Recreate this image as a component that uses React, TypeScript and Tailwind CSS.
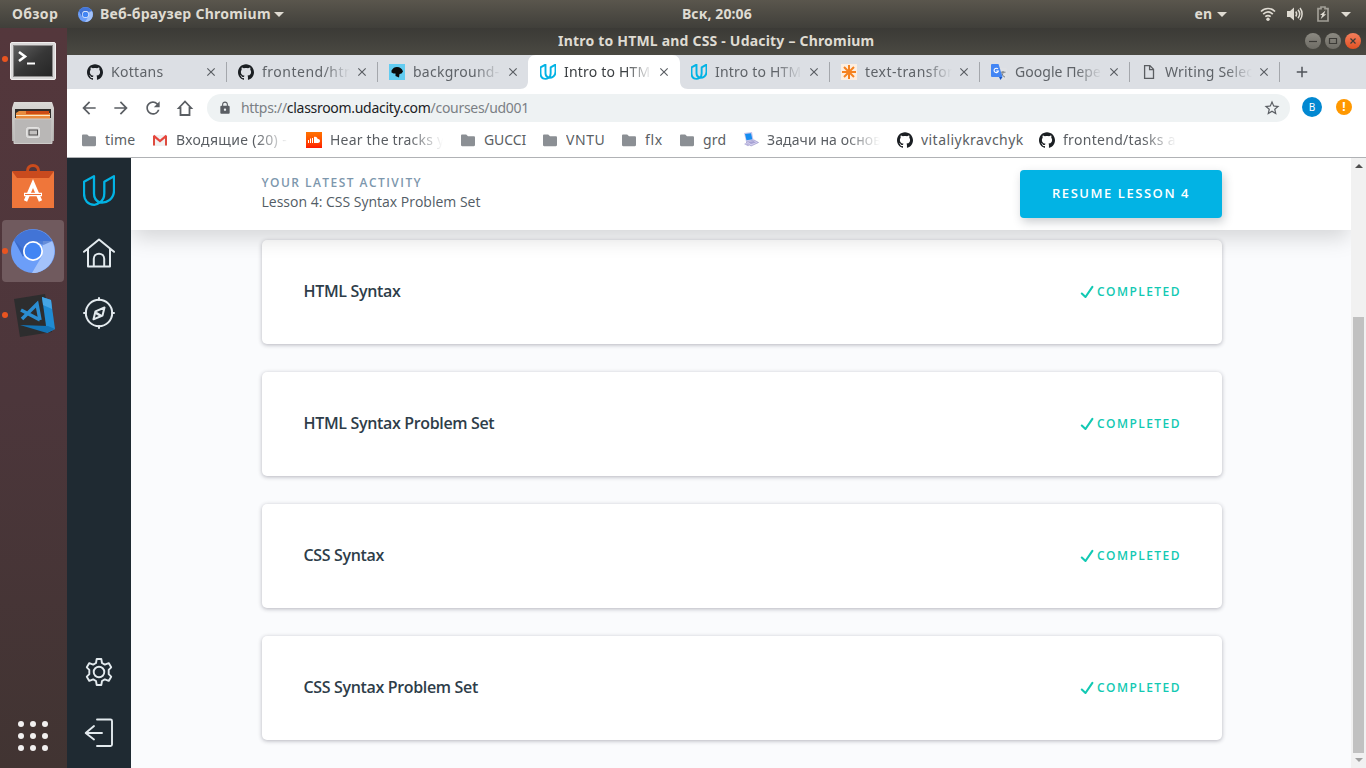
import type { ReactNode } from "react";
import { SiGithub } from "react-icons/si";
import { MdAdd, MdArrowBack, MdArrowForward, MdClose, MdLock, MdRefresh, MdStarBorder } from "react-icons/md";

const GithubMark = () => <SiGithub className="size-4 text-[#1b1f23]" />;

const UdacityMark = ({ className, width = 2.6 }: { className: string; width?: number }) => (
  <svg viewBox="0 0 32 32" className={className} fill="none" stroke="#02b3e4" strokeWidth={width} strokeLinejoin="round">
    <path d="M11 1.2v17.3c0 4.6 2.1 7.500 5.7 8.9-1.600 1.400-3.300 2.400-5.400 2.400C5 29.800 1 25.400 1 18.500V6.800z" />
    <path d="M16.700 27.400c2.800-1.500 4.600-4.500 4.600-9.100V6.800L31 1.200v14.500c0 7.500-6.500 13-14.300 11.700z" />
  </svg>
);

const ChromiumMark = ({ className }: { className: string }) => (
  <svg viewBox="0 0 44 44" className={className}>
    <circle cx="22" cy="22" r="22" fill="#6c9ef8" />
    <path d="M3 11A22 22 0 0 1 41 12H22L12 28z" fill="#4274d6" />
    <path d="M41 12A22 22 0 0 1 21 44l10-17 1-15z" fill="#a3c2fa" />
    <path d="M22 12h19.500l-9 4zM12 27L3 11l9 9z" fill="#3462bd" opacity=".55" />
    <circle cx="22" cy="22" r="10" fill="#fff" />
    <circle cx="22" cy="22" r="8.300" fill="#4285f4" />
  </svg>
);

const SpaniardIcon = () => (
  <svg viewBox="0 0 16 16" className="size-4">
    <path d="M0 0h16v16H0z" fill="#62ccf1" />
    <path d="M2.500 6.500C4 4 5.500 3 8 3c3 0 5 1.500 6 4.500L12.500 9.500 10.500 10 10 13.500 6.500 12 6.500 9.500 4.500 9.500 2.500 8.500z" fill="#0b0b0b" />
  </svg>
);

const AsteriskIcon = () => (
  <svg viewBox="0 0 16 16" className="size-4">
    <path d="M0 0h16v16H0z" fill="#fdeee0" />
    <path d="M8 1v14M1 8h14M3 3l10 10M13 3L3 13" stroke="#f58220" strokeWidth="2" />
  </svg>
);

const TranslateIcon = () => (
  <svg viewBox="0 0 16 16" className="size-4">
    <path d="M7 4h8a1 1 0 0 1 1 1v10a1 1 0 0 1-1 1H9z" fill="#dfe1e5" />
    <path d="M9.500 8.200h5M12 7v1.200c0 2-1.500 4-2.500 4.800M10.500 9.500c.6 1.500 2 3 3.500 3.600" stroke="#777c82" fill="none" />
    <path d="M1 0h6.500l4 13H1a1 1 0 0 1-1-1V1a1 1 0 0 1 1-1z" fill="#4285f4" />
    <path d="M8 13h3.500L9.500 16z" fill="#1a56c4" />
    <path d="M7 5a2.200 2.200 0 1 0 .400 2H5.200" stroke="#fff" fill="none" strokeWidth="1.100" />
  </svg>
);

const PageIcon = () => (
  <svg viewBox="0 0 16 16" className="size-4" fill="none" stroke="#5a5d61" strokeWidth="1.300">
    <path d="M3.600 1.600h5.300l3.600 3.700v9H3.600zM8.600 1.600v4h4" />
  </svg>
);

const GmailIcon = () => (
  <svg viewBox="0 0 16 16" className="size-4">
    <path d="M1 3h14v11H1z" fill="#f1f1f1" />
    <path d="M2 13.500V4M14 13.500V4" fill="none" stroke="#dd4b3e" strokeWidth="2" />
    <path d="M1.500 3.700L8 9l6.500-5.300" fill="none" stroke="#e8453c" strokeWidth="2.200" />
  </svg>
);

const SoundIcon = () => (
  <span className="flex size-4 items-center justify-center bg-linear-to-b from-[#ff7200] to-[#ff1500]">
    <svg viewBox="0 0 16 16" className="size-4" fill="#fff">
      <path d="M2 8h1v3H2zM4 6.500h1V11H4zM6 6h1v5H6zM8 5c2-.800 3.500.500 3.700 2 1.300-.3 2.300.7 2.300 2s-.9 2-2 2H8z" />
    </svg>
  </span>
);

const LaptopIcon = () => (
  <svg viewBox="0 0 16 16" className="size-4">
    <path d="M1 1l8-1 1.500 8L3 9.500z" fill="#c9c6ec" />
    <path d="M2 2l6-.800L9.300 7.300 3.500 8.300z" fill="#168df0" />
    <path d="M3 10l8-2 4.500 2.500L8 14z" fill="#d7d3f2" stroke="#8c86c0" strokeWidth=".6" />
    <path d="M5 10.300l5.500-1.300 2.500 1.400-5 1.600z" fill="#a7a2d4" />
    <path d="M1 12l2-1 4 2-2 1.300z" fill="#b7b3dd" />
  </svg>
);

const FolderIcon = () => (
  <svg viewBox="0 0 16 16" className="size-4" fill="#8b8f94">
    <path d="M2.200 2.500h4L8 4.300h5.700c.8 0 1.300.5 1.300 1.200V13c0 .7-.5 1.200-1.200 1.200H2.200C1.500 14.200 1 13.700 1 13V3.700c0-.7.5-1.200 1.200-1.200z" />
  </svg>
);

const fade = "[mask-image:linear-gradient(to_right,black_70%,transparent_100%)]";

type Tab = { icon: ReactNode; label: string; size: string; text: string; active?: boolean; divider?: boolean };
const tabs: Tab[] = [
  { icon: <GithubMark />, label: "Kottans", size: "w-[151px]", text: "w-[88px] tracking-[0.3px]", divider: true },
  { icon: <GithubMark />, label: "frontend/htm", size: "w-[151px]", text: "w-[88px] tracking-[0.5px]", divider: true },
  { icon: <SpaniardIcon />, label: "background-", size: "w-[151px]", text: "w-[88px] tracking-[0.25px]" },
  { icon: <UdacityMark className="size-4" width={3.800} />, label: "Intro to HTM", size: "w-[151px]", text: "w-[88px] tracking-[0.2px]", active: true },
  { icon: <UdacityMark className="size-4" width={3.800} />, label: "Intro to HTM", size: "w-[150px]", text: "w-[87px] tracking-[0.2px]", divider: true },
  { icon: <AsteriskIcon />, label: "text-transfor", size: "w-[150px]", text: "w-[87px] tracking-[0.45px]", divider: true },
  { icon: <TranslateIcon />, label: "Google Пере", size: "w-[150px]", text: "w-[87px] tracking-[0.05px]", divider: true },
  { icon: <PageIcon />, label: "Writing Selec", size: "w-[150px]", text: "w-[87px] tracking-[0.2px]", divider: true },
];

const bookmarks = [
  { icon: <FolderIcon />, label: "time", size: "w-[71px]", text: "w-8 tracking-[0.2px]" },
  { icon: <GmailIcon />, label: "Входящие (20) -", size: "w-[154px]", text: "w-[113px] tracking-[0.35px]", cut: true },
  { icon: <SoundIcon />, label: "Hear the tracks y", size: "w-[154px]", text: "w-[113px] tracking-[0.2px]", cut: true },
  { icon: <FolderIcon />, label: "GUCCI", size: "w-[82px]", text: "w-12 tracking-[-0.1px]" },
  { icon: <FolderIcon />, label: "VNTU", size: "w-[79px]", text: "w-12 tracking-[0.6px]" },
  { icon: <FolderIcon />, label: "flx", size: "w-[58px]", text: "w-6 tracking-[0.6px]" },
  { icon: <FolderIcon />, label: "grd", size: "w-16", text: "w-8 tracking-[0.2px]" },
  { icon: <LaptopIcon />, label: "Задачи на основ", size: "w-[154px]", text: "w-[113px] tracking-[0.1px]", cut: true },
  { icon: <GithubMark />, label: "vitaliykravchyk", size: "w-[142px]", text: "w-[108px] tracking-[0.45px]" },
  { icon: <GithubMark />, label: "frontend/tasks a", size: "w-[154px]", text: "w-[114px] tracking-[0.3px]", cut: true },
];

const Caret = ({ className = "" }: { className?: string }) => (
  <span className={`block h-0 w-0 shrink-0 border-x-[5px] border-t-[5px] border-x-transparent border-t-[#dfdbd2] ${className}`} />
);

function TopBar() {
  return (
    <header className="flex h-7 w-full shrink-0 items-center bg-linear-to-b from-[#5a564d] to-[#403f3a] text-sm font-bold text-[#dfdbd2]">
      <span className="w-[78px] pl-3 tracking-[0.35px]">Обзор</span>
      <ChromiumMark className="size-[15px]" />
      <span className="ml-[7px] w-[171px] whitespace-nowrap tracking-[0.25px]">Веб-браузер Chromium</span>
      <Caret className="ml-[3px]" />
      <span className="ml-[398px] w-20 whitespace-nowrap tracking-[0.1px]">Вск, 20:06</span>
      <span className="ml-auto mr-[5px]">en</span>
      <Caret className="mr-px" />
      <svg viewBox="0 0 16 16" className="ml-8 size-4" fill="none" stroke="#dfdbd2" strokeWidth="1.700">
        <path d="M1 5.500c4-4 10-4 14 0M3.200 8.200c3-2.800 6.600-2.800 9.600 0M5.300 10.700c1.800-1.500 3.600-1.500 5.400 0" />
        <circle cx="8" cy="13.200" r="1.700" fill="#dfdbd2" stroke="none" />
      </svg>
      <svg viewBox="0 0 16 16" className="ml-[11px] size-4" fill="none" stroke="#dfdbd2" strokeWidth="1.500">
        <path d="M0 5h3l4-3.500v13L3 11H0z" fill="#dfdbd2" stroke="none" />
        <path d="M8.800 5.500c1 1.500 1 3.500 0 5M11 3.800c2 2.500 2 6 0 8.400M13 2c2.800 3.500 2.800 8.500 0 12" />
      </svg>
      <svg viewBox="0 0 12 16" className="ml-[14px] h-4 w-3">
        <path d="M4 1h4v1.700h3V15H1V2.700h3z" fill="none" stroke="#a19e96" strokeWidth="1.700" />
        <path d="M8.500 4.500L3 9h2.200l-1.500 4L9.200 8.300H7z" fill="#dfdbd2" />
      </svg>
      <Caret className="ml-3 mr-[15px]" />
    </header>
  );
}

function LauncherCell({ children, running, active }: { children: ReactNode; running?: boolean; active?: boolean }) {
  return (
    <div className={`relative ml-[2px] flex h-[62px] w-[62px] shrink-0 items-center justify-center rounded-[4px] ${active ? "bg-[#705a5e]" : ""}`}>
      {running && <span className="absolute left-0 top-7 size-[6px] rounded-full bg-[#e95420]" />}
      {children}
    </div>
  );
}

function Launcher() {
  return (
    <aside className="flex w-[67px] shrink-0 flex-col gap-[2px] bg-linear-to-b from-[#54373c] via-[#4c363b] to-[#413432]">
      <LauncherCell running>
        <svg viewBox="0 0 46 38" className="mt-[3px] h-[38px] w-[46px]">
          <defs>
            <linearGradient id="term" x1="0" y1="0" x2="1" y2="1">
              <stop stopColor="#606060" />
              <stop offset=".5" stopColor="#373737" />
              <stop offset="1" stopColor="#252525" />
            </linearGradient>
          </defs>
          <rect x=".5" y=".5" width="45" height="37" rx="1.500" fill="#dad9d9" stroke="#f1efef" />
          <rect x="3.500" y="3.500" width="39" height="31" fill="url(#term)" stroke="#8d8b8b" />
          <path d="M9 10l6 4.500L9 19" fill="none" stroke="#fff" strokeWidth="2.600" />
          <path d="M17 21.500h8" stroke="#fff" strokeWidth="2" />
        </svg>
      </LauncherCell>
      <LauncherCell>
        <svg viewBox="0 0 42 44" className="-mt-px h-11 w-[42px]">
          <defs>
            <linearGradient id="cab" x1="0" y1="0" x2="0" y2="1">
              <stop stopColor="#dcdad7" />
              <stop offset="1" stopColor="#a9a7a5" />
            </linearGradient>
          </defs>
          <path d="M2 1h38l2 6v33H0V7z" fill="url(#cab)" />
          <path d="M3 8h36v9H3z" fill="#302d2b" />
          <path d="M4 12l3-2h16l2 2h13v6H4z" fill="#e98c3e" />
          <path d="M14 10h23v3H14z" fill="#cd4c15" />
          <path d="M4 14.500h34" stroke="#fbe6c8" strokeWidth="1.200" />
          <path d="M2 18h38v24.500H2z" fill="#b9b7b6" stroke="#ceccca" />
          <rect x="14.500" y="26.500" width="13" height="10" rx="2" fill="#d8d7d6" stroke="#e4e3e2" />
          <rect x="17" y="29" width="8.500" height="5" fill="#c3c1c0" stroke="#4c4b4b" />
        </svg>
      </LauncherCell>
      <LauncherCell>
        <svg viewBox="0 0 42 44" className="-mt-[2px] h-11 w-[42px]">
          <path d="M0 7h42l-4 7H4z" fill="#c94a1e" />
          <path d="M0 7l5 7h32l5-7v37H0z" fill="#ef763a" />
          <path d="M15.500 14V7c0-3 2-5.500 5.500-5.500s5.500 2.500 5.500 5.500v7" fill="none" stroke="#ca4b1c" strokeWidth="3" />
          <path d="M13.500 37L21 19.500 28.500 37M12 30.500h18" fill="none" stroke="#fff" strokeWidth="3.500" />
          <path d="M13 30.500h16" stroke="#ed7136" />
        </svg>
      </LauncherCell>
      <LauncherCell running active>
        <ChromiumMark className="size-11" />
      </LauncherCell>
      <LauncherCell running>
        <svg viewBox="0 0 42 44" className="ml-1 mt-[1px] h-11 w-[42px]">
          <path d="M0 5l31-5 7 38-32 5z" fill="#2d2d2e" />
          <path d="M28 3l9 3 4 29-8 4z" fill="#1f8bd3" />
          <path d="M28 3l9 3 1 9-9-4z" fill="#45a5e5" />
          <path d="M6 31l28 1 7 3-8 4z" fill="#1473b5" />
          <path d="M7 16l19 10M8 25L23 10l3 16" fill="none" stroke="#2b8dd2" strokeWidth="3.500" />
        </svg>
      </LauncherCell>
      <div className="mb-[17px] ml-[18px] mt-auto grid w-[30px] grid-cols-3 gap-[6px]">
        {Array.from({ length: 9 }, (_, i) => <span key={i} className="size-[6px] rounded-full bg-[#f2f0f0]" />)}
      </div>
    </aside>
  );
}

function TitleBar() {
  return (
    <div className="flex h-[27px] shrink-0 items-center bg-linear-to-b from-[#3b3a36] to-[#4a4942]">
      <span className="-mt-[2px] ml-[491px] whitespace-nowrap text-sm font-bold tracking-[0.2px] text-[#dfdbd2]">Intro to HTML and CSS - Udacity – Chromium</span>
      <div className="-mt-px ml-auto mr-[5px] flex gap-1">
        {["M4 8.500h8", "M4.500 5.500h7v5h-7z", "M5.500 5.500l5 5M10.500 5.500l-5 5"].map((d, i) => (
          <span key={d} className={`flex size-4 items-center justify-center rounded-full ${i === 2 ? "bg-linear-to-b from-[#f27e5b] to-[#e2501f]" : "bg-linear-to-b from-[#8c8a82] to-[#6e6c65]"}`}>
            <svg viewBox="0 0 16 16" className="size-4" fill="none" stroke="#3c3b37" strokeWidth="1.200"><path d={d} /></svg>
          </span>
        ))}
      </div>
    </div>
  );
}

function TabStrip() {
  return (
    <div className="flex h-[34px] shrink-0 bg-[#dcdfe4] pl-[9px] text-sm">
      {tabs.map((t, i) => (
        <div key={i} className={`relative flex h-full shrink-0 items-center ${t.size} ${t.active ? "text-[#3c4043]" : "text-[#5f6368]"}`}>
          {t.active && (
            <svg viewBox="0 0 168 34" className="absolute -left-[9px] top-0 h-[34px] w-[168px]" fill="#fff">
              <path d="M0 34c5 0 8-3 8-8V8c0-5 3-8 8-8h136c5 0 8 3 8 8v18c0 5 3 8 8 8z" />
            </svg>
          )}
          <span className="relative ml-[11px] shrink-0">{t.icon}</span>
          <span className={`relative ml-2 overflow-hidden whitespace-nowrap ${fade} ${t.text}`}>{t.label}</span>
          <MdClose className="relative ml-[5px] size-[14px] shrink-0 text-[#5a5e63]" />
          {t.divider && <span className="ml-auto h-5 w-px bg-[#a4a7ac]" />}
        </div>
      ))}
      <MdAdd className="ml-[13px] mt-2 size-[18px] text-[#50545a]" />
    </div>
  );
}

function Toolbar() {
  return (
    <div className="flex h-[37px] shrink-0 items-center bg-white text-[#5a5e63]">
      <MdArrowBack className="ml-3 size-5" />
      <MdArrowForward className="ml-3 size-5" />
      <MdRefresh className="ml-3 size-5" />
      <svg viewBox="0 0 20 20" className="ml-3 size-5" fill="none" stroke="currentColor" strokeWidth="1.800">
        <path d="M3.800 10L10 3.500l6.200 6.500H14.500v7h-9v-7z" />
      </svg>
      <div className="ml-3 flex h-7 w-[1083px] items-center rounded-full bg-[#eef2f3]">
        <MdLock className="ml-[11px] size-[14px]" />
        <span className="ml-[9px] whitespace-nowrap text-sm tracking-[-0.3px] text-[#7b8085]">
          https://<span className="text-[#202124]">classroom.udacity.com</span>/courses/ud001
        </span>
        <MdStarBorder className="ml-auto mr-[9px] size-[18px]" />
      </div>
      <span className="-mt-px ml-3 flex size-5 items-center justify-center rounded-full bg-[#0288d1] text-[10px] text-white">В</span>
      <span className="-mt-px ml-[14px] flex size-4 items-center justify-center rounded-full bg-[#ff9800] text-[12px] font-bold text-white">!</span>
    </div>
  );
}

function BookmarkBar() {
  return (
    <div className="flex h-8 shrink-0 items-center border-b border-[#b0b2b5] bg-white pb-[3px] pl-[14px] text-sm text-[#5a5e63]">
      {bookmarks.map((b) => (
        <div key={b.label} className={`flex shrink-0 items-center gap-2 ${b.size}`}>
          {b.icon}
          <span className={`overflow-hidden whitespace-nowrap ${b.text} ${b.cut ? fade : ""}`}>{b.label}</span>
        </div>
      ))}
    </div>
  );
}

function SideNav() {
  return (
    <nav className="flex w-16 shrink-0 flex-col items-center bg-[#1f2a32] text-[#e3eaee]">
      <UdacityMark className="mt-[17px] size-8" width={2.300} />
      <svg viewBox="0 0 32 32" className="mt-[30px] size-8" fill="none" stroke="currentColor" strokeWidth="2" strokeLinejoin="round" strokeLinecap="round">
        <path d="M1 14.800L16 2.500l15 12.300M5 12v17.500h22V12M10.800 29v-7.200c0-6.800 10.400-6.800 10.400 0V29" />
      </svg>
      <svg viewBox="0 0 32 32" className="mt-7 size-8" fill="none" stroke="currentColor" strokeWidth="2" strokeLinejoin="round" strokeLinecap="round">
        <circle cx="16" cy="16" r="13.200" />
        <path d="M16 1v2M16 29v2M1 16h2M29 16h2M21.500 10.500l-2 8-9 3.800 2-8z" />
        <path d="M13.700 16.300l3.800 2.200" strokeWidth="2.500" />
      </svg>
      <svg viewBox="0 0 28 28" className="mt-auto size-7" fill="none" stroke="currentColor" strokeWidth="1.900" strokeLinejoin="round">
        <circle cx="14" cy="14" r="5.300" />
        <path d="M11.700 1h4.600l.7 4 2.800 1.600 3.900-1.500 2.500 4.200-2.500 2.500v4.400l2.500 2.500-2.500 4.200-3.900-1.500L17 23l-.7 4h-4.600l-.7-4-2.800-1.600-3.900 1.500-2.500-4.200L4.300 16.200v-4.400L1.800 9.300l2.500-4.200 3.900 1.500L11 5z" />
      </svg>
      <svg viewBox="0 0 30 30" className="mb-5 mt-8 size-[30px]" fill="none" stroke="currentColor" strokeWidth="1.900" strokeLinejoin="round" strokeLinecap="round">
        <path d="M13 1.500h13.500q1.500 0 1.500 1.500v23.500q0 1.500-1.500 1.500H13M2 15h16M10 8l-8.300 7L10 21.500" />
      </svg>
    </nav>
  );
}

const lessons = ["HTML Syntax", "HTML Syntax Problem Set", "CSS Syntax", "CSS Syntax Problem Set"];

function Classroom() {
  return (
    <main className="flex min-w-0 flex-1 flex-col overflow-hidden bg-[#fafbfd] font-['Open_Sans',sans-serif]">
      <div className="z-10 flex h-[72px] shrink-0 items-center bg-white pl-[131px] shadow-[0_10px_20px_-2px_rgba(0,0,0,0.15)]">
        <div className="-ml-[0.5px] -mt-[2px] flex w-[758.5px] flex-col">
          <span className="text-[12px] font-semibold leading-[18px] tracking-[1.450px] text-[#7d97ad]">YOUR LATEST ACTIVITY</span>
          <span className="text-sm leading-5 text-[#525c65]">Lesson 4: CSS Syntax Problem Set</span>
        </div>
        <button className="h-12 w-[202px] rounded-[4px] bg-[#02b3e4] text-[13px] font-semibold tracking-[1.550px] text-white shadow-[2px_4px_10px_0_rgba(46,61,73,0.25)]">RESUME LESSON 4</button>
      </div>
      <div className="flex flex-col gap-7 pl-[131px] pt-[10px]">
        {lessons.map((l) => (
          <section key={l} className="flex h-[104px] w-[960px] items-center justify-between rounded-[5px] bg-white pl-[41.5px] pr-[41px] shadow-[0_1px_4px_0_rgba(30,30,50,0.32)]">
            <h3 className="-mt-[2px] text-[16px] font-semibold tracking-[-0.340px] text-[#2e3d49]">{l}</h3>
            <div className="-mt-px flex items-center gap-[3px] text-[12px] font-semibold tracking-[1.450px] text-[#12c9b3]">
              <svg viewBox="0 0 14 14" className="size-[14px]" fill="none" stroke="currentColor" strokeWidth="2.100" strokeLinecap="round" strokeLinejoin="round">
                <path d="M1.800 8.500L5.500 12 12.400 1.800" />
              </svg>
              <span>COMPLETED</span>
            </div>
          </section>
        ))}
      </div>
    </main>
  );
}

function Scrollbar() {
  return (
    <div className="flex w-[15px] shrink-0 flex-col items-center bg-[#f1f1f1]">
      <span className="mt-[6px] h-0 w-0 border-x-4 border-b-4 border-x-transparent border-b-[#505050]" />
      <span className="mt-[149px] h-[436px] w-[11px] bg-[#c1c1c1]" />
      <span className="mt-[5px] h-0 w-0 border-x-4 border-t-4 border-x-transparent border-t-[#a0a0a0]" />
    </div>
  );
}

export default function App() {
  return (
    <div className="flex h-[768px] w-[1366px] flex-col overflow-hidden font-['Noto_Sans',sans-serif]">
      <TopBar />
      <div className="flex min-h-0 flex-1">
        <Launcher />
        <div className="flex min-w-0 flex-1 flex-col">
          <TitleBar />
          <TabStrip />
          <Toolbar />
          <BookmarkBar />
          <div className="flex min-h-0 flex-1">
            <SideNav />
            <Classroom />
            <Scrollbar />
          </div>
        </div>
      </div>
    </div>
  );
}
